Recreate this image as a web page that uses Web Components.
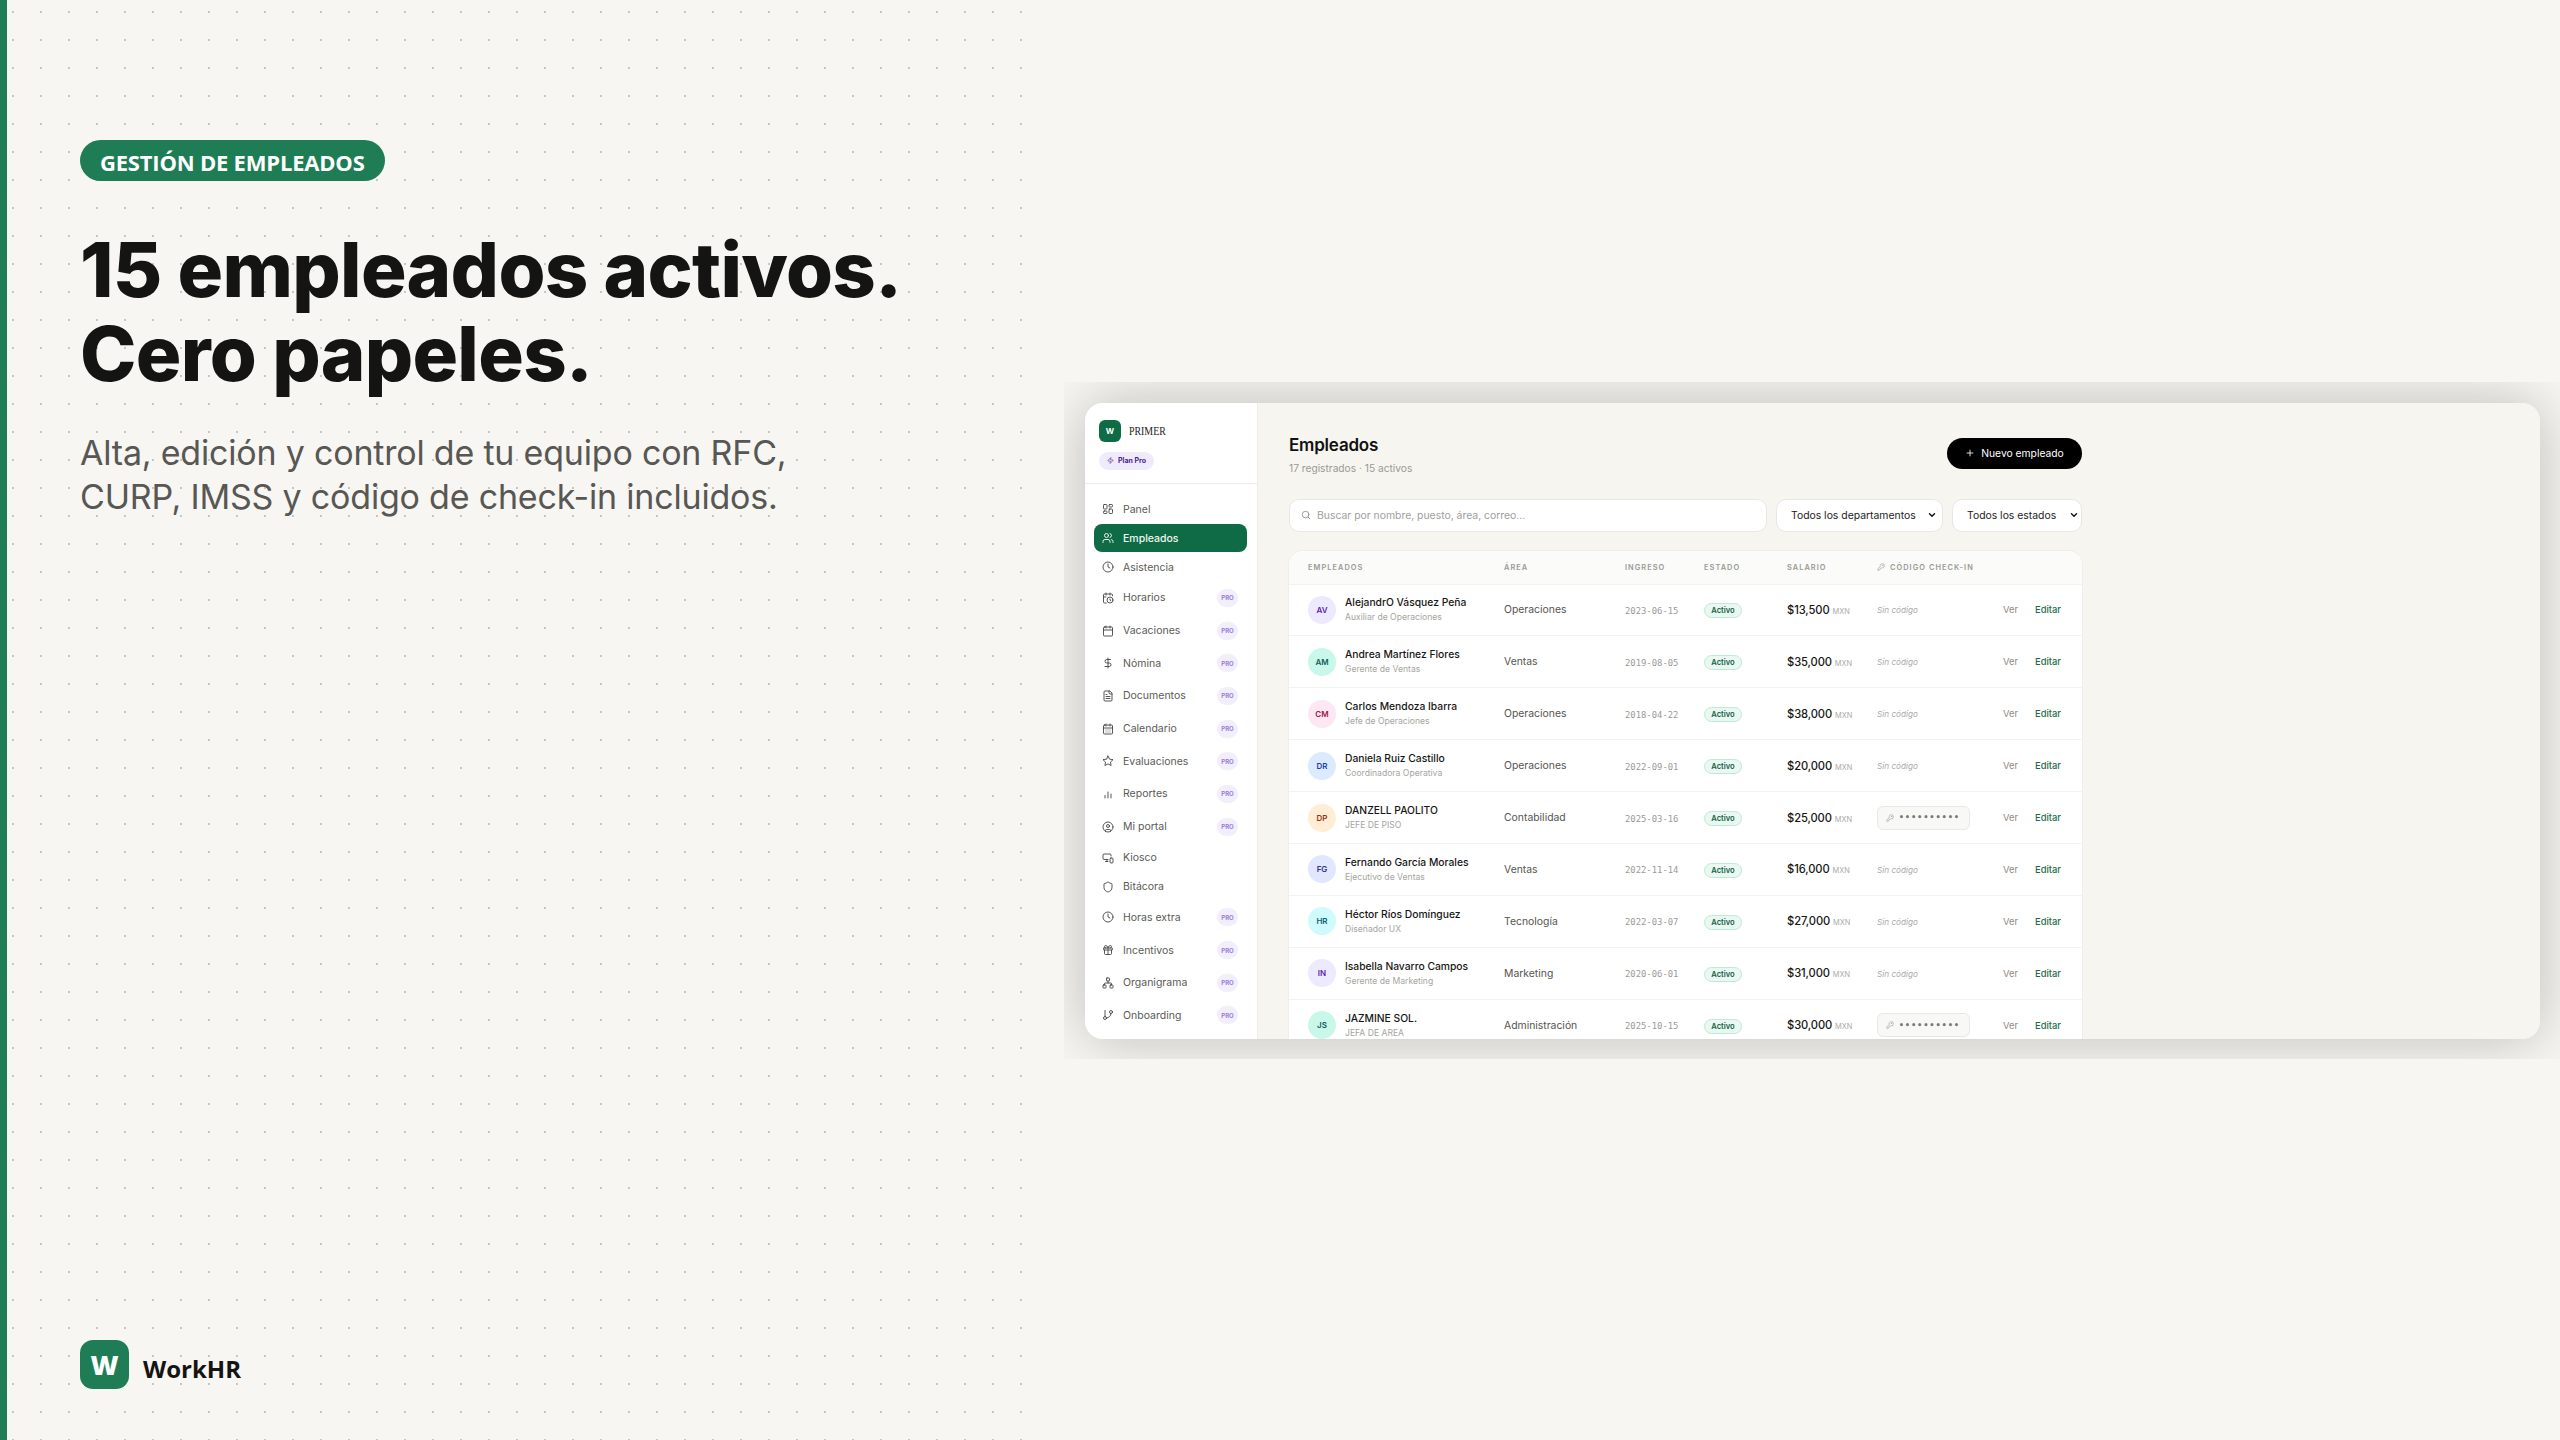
<!DOCTYPE html>
<html lang="es">
<head>
<meta charset="utf-8">
<title>WorkHR - Empleados</title>
<style>
  html, body { margin: 0; padding: 0; background: #f7f6f2; }
</style>
</head>
<body>
<promo-slide></promo-slide>
<script>
const UI_FONT = `"Inter", "Liberation Sans", sans-serif`;

const ICONS = {
  grid: `<rect x="3" y="3" width="7" height="9" rx="1.5"/><rect x="14" y="3" width="7" height="5" rx="1.5"/><rect x="14" y="12" width="7" height="9" rx="1.5"/><rect x="3" y="16" width="7" height="5" rx="1.5"/>`,
  users: `<path d="M16 21v-2a4 4 0 0 0-4-4H6a4 4 0 0 0-4 4v2"/><circle cx="9" cy="7" r="4"/><path d="M22 21v-2a4 4 0 0 0-3-3.87"/><path d="M16 3.13a4 4 0 0 1 0 7.75"/>`,
  clock: `<circle cx="12" cy="12" r="10"/><polyline points="12 6 12 12 16 14"/>`,
  calclock: `<path d="M21 7.5V6a2 2 0 0 0-2-2H5a2 2 0 0 0-2 2v14a2 2 0 0 0 2 2h3.5"/><path d="M16 2v4"/><path d="M8 2v4"/><path d="M3 10h5"/><path d="M17.5 17.5 16 16.3V14"/><circle cx="16" cy="16" r="6"/>`,
  calendar: `<rect x="3" y="4" width="18" height="18" rx="2"/><path d="M16 2v4"/><path d="M8 2v4"/><path d="M3 10h18"/>`,
  dollar: `<path d="M12 2v20"/><path d="M17 5H9.5a3.5 3.5 0 0 0 0 7h5a3.5 3.5 0 0 1 0 7H6"/>`,
  file: `<path d="M15 2H6a2 2 0 0 0-2 2v16a2 2 0 0 0 2 2h12a2 2 0 0 0 2-2V7Z"/><path d="M14 2v4a2 2 0 0 0 2 2h4"/><path d="M16 13H8"/><path d="M16 17H8"/><path d="M10 9H8"/>`,
  caldays: `<rect x="3" y="4" width="18" height="18" rx="2"/><path d="M16 2v4"/><path d="M8 2v4"/><path d="M3 10h18"/><path d="M8 14h.01M12 14h.01M16 14h.01M8 18h.01M12 18h.01M16 18h.01"/>`,
  star: `<polygon points="12 2 15.09 8.26 22 9.27 17 14.14 18.18 21.02 12 17.77 5.82 21.02 7 14.14 2 9.27 8.91 8.26"/>`,
  chart: `<path d="M12 20V8"/><path d="M18 20V12"/><path d="M6 20v-5"/>`,
  portal: `<circle cx="12" cy="12" r="10"/><circle cx="12" cy="10" r="3"/><path d="M7 20.662V19a2 2 0 0 1 2-2h6a2 2 0 0 1 2 2v1.662"/>`,
  kiosk: `<path d="M18 8V6a2 2 0 0 0-2-2H4a2 2 0 0 0-2 2v7a2 2 0 0 0 2 2h8"/><path d="M10 19v-4"/><path d="M7 19h5"/><rect x="16" y="12" width="6" height="10" rx="2"/>`,
  shield: `<path d="M20 13c0 5-3.5 7.5-7.66 8.95a1 1 0 0 1-.67-.01C7.5 20.5 4 18 4 13V6a1 1 0 0 1 1-1c2 0 4.5-1.2 6.24-2.72a1.17 1.17 0 0 1 1.52 0C14.51 3.81 17 5 19 5a1 1 0 0 1 1 1z"/>`,
  gift: `<rect x="3" y="8" width="18" height="4" rx="1"/><path d="M12 8v13"/><path d="M19 12v7a2 2 0 0 1-2 2H7a2 2 0 0 1-2-2v-7"/><path d="M7.5 8a2.5 2.5 0 0 1 0-5A4.8 8 0 0 1 12 8a4.8 8 0 0 1 4.5-5 2.5 2.5 0 0 1 0 5"/>`,
  org: `<rect x="16" y="16" width="6" height="6" rx="1"/><rect x="2" y="16" width="6" height="6" rx="1"/><rect x="9" y="2" width="6" height="6" rx="1"/><path d="M5 16v-3a1 1 0 0 1 1-1h12a1 1 0 0 1 1 1v3"/><path d="M12 12V8"/>`,
  branch: `<line x1="6" y1="3" x2="6" y2="15"/><circle cx="18" cy="6" r="3"/><circle cx="6" cy="18" r="3"/><path d="M18 9a9 9 0 0 1-9 9"/>`,
  search: `<circle cx="11" cy="11" r="8"/><path d="m21 21-4.3-4.3"/>`,
  key: `<path d="M2.586 17.414A2 2 0 0 0 2 18.828V21a1 1 0 0 0 1 1h3a1 1 0 0 0 1-1v-1a1 1 0 0 1 1-1h1a1 1 0 0 0 1-1v-1a1 1 0 0 1 1-1h.172a2 2 0 0 0 1.414-.586l.814-.814a6.5 6.5 0 1 0-4-4z"/><circle cx="16.5" cy="7.5" r=".5"/>`,
  plus: `<path d="M5 12h14"/><path d="M12 5v14"/>`,
  zap: `<path d="M4 14a1 1 0 0 1-.78-1.63l9.9-10.2a.5.5 0 0 1 .86.46l-1.92 6.02A1 1 0 0 0 13 10h7a1 1 0 0 1 .78 1.63l-9.9 10.2a.5.5 0 0 1-.86-.46l1.92-6.02A1 1 0 0 0 11 14z"/>`,
  chevron: `<path d="m6 9 6 6 6-6"/>`,
};

const icon = (name, size, width = 2) =>
  `<svg xmlns="http://www.w3.org/2000/svg" width="${size}" height="${size}" viewBox="0 0 24 24" fill="none" stroke="currentColor" stroke-width="${width}" stroke-linecap="round" stroke-linejoin="round">${ICONS[name]}</svg>`;

const NAV = [
  ["grid", "Panel"],
  ["users", "Empleados", false, true],
  ["clock", "Asistencia"],
  ["calclock", "Horarios", true],
  ["calendar", "Vacaciones", true],
  ["dollar", "Nómina", true],
  ["file", "Documentos", true],
  ["caldays", "Calendario", true],
  ["star", "Evaluaciones", true],
  ["chart", "Reportes", true],
  ["portal", "Mi portal", true],
  ["kiosk", "Kiosco"],
  ["shield", "Bitácora"],
  ["clock", "Horas extra", true],
  ["gift", "Incentivos", true],
  ["org", "Organigrama", true],
  ["branch", "Onboarding", true],
];

const EMPLOYEES = [
  ["AV", "#ede9fe", "#5b21b6", "AlejandrO Vásquez Peña", "Auxiliar de Operaciones", "Operaciones", "2023-06-15", "$13,500", false],
  ["AM", "#c9f7ea", "#115e59", "Andrea Martínez Flores", "Gerente de Ventas", "Ventas", "2019-08-05", "$35,000", false],
  ["CM", "#fce7f3", "#9d174d", "Carlos Mendoza Ibarra", "Jefe de Operaciones", "Operaciones", "2018-04-22", "$38,000", false],
  ["DR", "#dbeafe", "#1e40af", "Daniela Ruiz Castillo", "Coordinadora Operativa", "Operaciones", "2022-09-01", "$20,000", false],
  ["DP", "#ffedd5", "#9a3412", "DANZELL PAOLITO", "JEFE DE PISO", "Contabilidad", "2025-03-16", "$25,000", true],
  ["FG", "#e0e7ff", "#3730a3", "Fernando García Morales", "Ejecutivo de Ventas", "Ventas", "2022-11-14", "$16,000", false],
  ["HR", "#cffafe", "#155e75", "Héctor Ríos Domínguez", "Diseñador UX", "Tecnología", "2022-03-07", "$27,000", false],
  ["IN", "#ede9fe", "#5b21b6", "Isabella Navarro Campos", "Gerente de Marketing", "Marketing", "2020-06-01", "$31,000", false],
  ["JS", "#c9f7ea", "#115e59", "JAZMINE SOL.", "JEFA DE AREA", "Administración", "2025-10-15", "$30,000", true],
];

class BrandMark extends HTMLElement {
  constructor() {
    super();
    this.attachShadow({ mode: "open" });
  }

  connectedCallback() {
    this.shadowRoot.innerHTML = `
      <style>
        :host { display: flex; align-items: center; gap: 14px; }
        .logo {
          width: 49px; height: 49px;
          border-radius: 13px;
          background: #1e7d55;
          color: #fff;
          display: flex; align-items: center; justify-content: center;
          font: 800 27px "Open Sans", sans-serif;
        }
        .name { font: 700 24px "Open Sans", sans-serif; color: #141412; padding-top: 7px; }
      </style>
      <div class="logo">W</div>
      <div class="name"><slot></slot></div>
    `;
  }
}

class NavItem extends HTMLElement {
  constructor() {
    super();
    this.attachShadow({ mode: "open" });
  }

  connectedCallback() {
    const pro = this.hasAttribute("pro");
    const active = this.hasAttribute("active");
    this.shadowRoot.innerHTML = `
      <style>
        :host {
          display: flex; align-items: center;
          height: ${pro ? "32.7px" : "29px"};
          margin: 0 10px 0 9px;
        }
        .item {
          flex: 1;
          height: 28px;
          display: flex; align-items: center;
          gap: 9px;
          padding: 0 9px 0 8px;
          border-radius: 8px;
          font: 400 10.5px ${UI_FONT};
          color: ${active ? "#eef8f3" : "#5a5a56"};
          background: ${active ? "#0f6b45" : "transparent"};
          ${active ? "font-weight: 500;" : ""}
        }
        svg { flex: none; color: ${active ? "#fff" : "#444"}; }
        .label { flex: 1; }
        .pro {
          width: 21px; height: 18px;
          border-radius: 9px;
          background: #f2eefc;
          color: #9b80d8;
          font: 700 6px ${UI_FONT};
          display: flex; align-items: center; justify-content: center;
        }
      </style>
      <div class="item">
        ${icon(this.getAttribute("icon"), 12, 1.8)}
        <span class="label"><slot></slot></span>
        ${pro ? `<span class="pro">PRO</span>` : ""}
      </div>
    `;
  }
}

class SideNav extends HTMLElement {
  constructor() {
    super();
    this.attachShadow({ mode: "open" });
  }

  connectedCallback() {
    this.shadowRoot.innerHTML = `
      <style>
        :host {
          display: block;
          width: 172px;
          flex: none;
          background: #fff;
          border-right: 1px solid #eeede9;
        }
        .head {
          box-sizing: border-box;
          padding: 17px 14px 0;
          border-bottom: 1px solid #eeede9;
          height: 81px;
        }
        .brand { display: flex; align-items: center; gap: 8px; }
        .logo {
          width: 22px; height: 22px;
          border-radius: 6px;
          background: #0f6b45;
          color: #fff;
          font: 700 8px ${UI_FONT};
          display: flex; align-items: center; justify-content: center;
        }
        .company { font: 400 13px "Liberation Serif", serif; color: #222; transform: scaleX(.76); transform-origin: left; }
        .plan {
          display: inline-flex; align-items: center; gap: 4px;
          height: 18px;
          margin-top: 10px;
          padding: 0 8px;
          border-radius: 9px;
          background: #f0ebfc;
          color: #4c1d95;
          font: 700 7px ${UI_FONT};
        }
        nav { padding-top: 11px; }
      </style>
      <div class="head">
        <div class="brand"><div class="logo">W</div><div class="company">PRIMER</div></div>
        <div class="plan">${icon("zap", 7, 2)}Plan Pro</div>
      </div>
      <nav>
        ${NAV.map(([ic, label, pro, active]) => `<nav-item icon="${ic}"${pro ? " pro" : ""}${active ? " active" : ""}>${label}</nav-item>`).join("")}
      </nav>
    `;
  }
}

class EmployeeRow extends HTMLElement {
  constructor() {
    super();
    this.attachShadow({ mode: "open" });
  }

  set employee(data) {
    this.data = data;
  }

  connectedCallback() {
    const [initials, bg, fg, name, role, area, date, salary, hasCode] = this.data;
    this.shadowRoot.innerHTML = `
      <style>
        :host {
          display: grid;
          grid-template-columns: 196px 121px 79px 83px 90px 126px 32px 1fr;
          align-items: center;
          height: 51.9px;
          box-sizing: border-box;
          padding-left: 19px;
          border-top: 1px solid #f3f3f0;
          font-family: ${UI_FONT};
        }
        .who { display: flex; align-items: center; gap: 9px; }
        .avatar {
          width: 28px; height: 28px;
          border-radius: 50%;
          background: ${bg};
          color: ${fg};
          font: 600 8px ${UI_FONT};
          display: flex; align-items: center; justify-content: center;
          flex: none;
        }
        .name { font-size: 10.3px; font-weight: 500; color: #161614; line-height: 14px; white-space: nowrap; }
        .role { font-size: 8.6px; color: #a5a5a0; line-height: 13px; margin-top: 2px; white-space: nowrap; }
        .area { font-size: 10.4px; color: #55554f; }
        .date { font: 400 8.9px "DejaVu Sans Mono", monospace; color: #9a9a95; margin-top: 2px; }
        .status {
          justify-self: start;
          width: 38px; height: 15px;
          margin-top: 2px;
          box-sizing: border-box;
          border: 1px solid #bfe9d7;
          border-radius: 8px;
          background: #e9f8f2;
          color: #14603f;
          font-size: 7.6px; font-weight: 600;
          display: flex; align-items: center; justify-content: center;
        }
        .salary { font-size: 11.2px; font-weight: 500; color: #161614; white-space: nowrap; letter-spacing: -.1px; }
        .salary small { font-size: 7.4px; font-weight: 400; color: #aaa; letter-spacing: 0; }
        .none { display: block; font-size: 8.2px; line-height: 10px; font-style: italic; color: #aaa; margin-top: 1px; }
        .code {
          width: 93px; height: 24px;
          box-sizing: border-box;
          padding-left: 8px;
          border: 1px solid #e8e8e4;
          border-radius: 6px;
          background: #f8f8f6;
          display: flex; align-items: center; gap: 5px;
          color: #999;
        }
        .dots { font: 700 8px "DejaVu Sans Mono", monospace; color: #777; letter-spacing: 1.3px; }
        .ver { font-size: 9.4px; color: #8a8a85; }
        .edit { font-size: 9.4px; font-weight: 500; color: #1f6b4c; }
      </style>
      <div class="who">
        <div class="avatar">${initials}</div>
        <div><div class="name">${name}</div><div class="role">${role}</div></div>
      </div>
      <div class="area">${area}</div>
      <div class="date">${date}</div>
      <div class="status">Activo</div>
      <div class="salary">${salary} <small>MXN</small></div>
      <div>${hasCode ? `<div class="code">${icon("key", 8, 1.8)}<span class="dots">••••••••••</span></div>` : `<span class="none">Sin código</span>`}</div>
      <div class="ver">Ver</div>
      <div class="edit">Editar</div>
    `;
  }
}

class EmployeeTable extends HTMLElement {
  constructor() {
    super();
    this.attachShadow({ mode: "open" });
  }

  connectedCallback() {
    this.shadowRoot.innerHTML = `
      <style>
        :host {
          display: block;
          background: #fff;
          border-radius: 14px 14px 0 0;
          box-shadow: 0 0 0 1px #efeeea;
          overflow: hidden;
        }
        .head {
          display: grid;
          grid-template-columns: 196px 121px 79px 83px 90px 1fr;
          align-items: center;
          height: 33px;
          padding-left: 19px;
          background: #fbfbfa;
          font: 600 7.4px ${UI_FONT};
          letter-spacing: 1.05px;
          color: #9a9a95;
          white-space: nowrap;
        }
        .check { display: flex; align-items: center; gap: 5px; }
      </style>
      <div class="head">
        <div>EMPLEADOS</div><div>ÁREA</div><div>INGRESO</div><div>ESTADO</div><div>SALARIO</div>
        <div class="check">${icon("key", 8, 1.8)}CÓDIGO CHECK-IN</div>
      </div>
      <div id="rows"></div>
    `;
    const rows = this.shadowRoot.querySelector("#rows");
    EMPLOYEES.forEach((emp) => {
      const row = document.createElement("employee-row");
      row.employee = emp;
      rows.appendChild(row);
    });
  }
}

class EmployeesPage extends HTMLElement {
  constructor() {
    super();
    this.attachShadow({ mode: "open" });
  }

  connectedCallback() {
    this.shadowRoot.innerHTML = `
      <style>
        :host {
          display: block;
          flex: 1;
          background: #f6f5f0;
          padding: 31px 0 0 31px;
          font-family: ${UI_FONT};
        }
        .wrap { width: 793px; }
        header { display: flex; justify-content: space-between; align-items: flex-start; }
        h1 { margin: 0; font-size: 17px; font-weight: 600; line-height: 22px; color: #111; letter-spacing: -.2px; }
        .sub { font-size: 10.2px; color: #9a9a95; line-height: 14px; margin-top: 5px; }
        .new {
          width: 135px; height: 31px;
          margin-top: 4px;
          border-radius: 16px;
          background: #000;
          color: #fff;
          font-size: 10.3px;
          display: flex; align-items: center; justify-content: center; gap: 6px;
        }
        .filters { display: flex; gap: 9px; margin: 24px 0 19px; }
        .box {
          height: 33px;
          box-sizing: border-box;
          background: #fff;
          border: 1px solid #e8e7e2;
          border-radius: 10px;
          display: flex; align-items: center;
          font-size: 10.4px;
          color: #222;
        }
        .search { flex: 1; padding-left: 11px; gap: 6px; color: #a0a09b; }
        .search svg { color: #888; }
        .dep { width: 167px; padding: 0 5px 0 14px; justify-content: space-between; }
        .est { width: 130px; padding: 0 2px 0 14px; justify-content: space-between; }
        .box svg.chev { color: #111; }
      </style>
      <div class="wrap">
        <header>
          <div>
            <h1>Empleados</h1>
            <div class="sub">17 registrados · 15 activos</div>
          </div>
          <div class="new">${icon("plus", 10, 2)}Nuevo empleado</div>
        </header>
        <div class="filters">
          <div class="box search">${icon("search", 10, 2)}<span>Buscar por nombre, puesto, área, correo...</span></div>
          <div class="box dep"><span>Todos los departamentos</span>${icon("chevron", 10, 3.4).replace("<svg", '<svg class="chev"')}</div>
          <div class="box est"><span>Todos los estados</span>${icon("chevron", 10, 3.4).replace("<svg", '<svg class="chev"')}</div>
        </div>
        <employee-table></employee-table>
      </div>
    `;
  }
}

class AppWindow extends HTMLElement {
  constructor() {
    super();
    this.attachShadow({ mode: "open" });
  }

  connectedCallback() {
    this.shadowRoot.innerHTML = `
      <style>
        :host {
          display: block;
          overflow: hidden;
          padding: 21px 20px 20px 21px;
        }
        .card {
          display: flex;
          height: 636px;
          border-radius: 18px;
          overflow: hidden;
          box-shadow: 0 0 60px rgba(0, 0, 0, .24);
        }
      </style>
      <div class="card">
        <side-nav></side-nav>
        <employees-page></employees-page>
      </div>
    `;
  }
}

class PromoSlide extends HTMLElement {
  constructor() {
    super();
    this.attachShadow({ mode: "open" });
  }

  connectedCallback() {
    this.shadowRoot.innerHTML = `
      <style>
        :host {
          display: flex;
          width: 2560px; height: 1440px;
          overflow: hidden;
          background: #f7f6f2;
        }
        .left {
          width: 1030px;
          flex: none;
          box-sizing: border-box;
          display: flex; flex-direction: column;
          align-items: flex-start;
          padding: 140px 0 51px 73px;
          border-left: 7px solid #1e7d55;
          background-image: radial-gradient(circle, #c6c6c2 1.3px, transparent 1.5px);
          background-size: 28px 28px;
          background-position: -8px -2px;
          background-origin: padding-box;
        }
        .tag {
          height: 41px;
          box-sizing: border-box;
          padding: 2px 20px 0;
          display: flex; align-items: center;
          border-radius: 21px;
          background: #1e7d55;
          color: #fff;
          font: 700 22px "Open Sans", sans-serif;
          letter-spacing: -.2px;
        }
        h1 {
          margin: 46px 0 0;
          font: 800 76px/84px "Inter", sans-serif;
          letter-spacing: -.7px;
          color: #141412;
        }
        p {
          margin: 36px 0 0;
          font: 400 34px/44px "Inter", sans-serif;
          letter-spacing: -.2px;
          color: #575753;
        }
        brand-mark { margin-top: auto; }
        .right {
          flex: 1;
          min-width: 0;
          display: flex; flex-direction: column; justify-content: center;
          padding-left: 34px;
        }
      </style>
      <section class="left">
        <div class="tag">GESTIÓN DE EMPLEADOS</div>
        <h1>15 empleados activos.<br>Cero papeles.</h1>
        <p>Alta, edición y control de tu equipo con RFC,<br>CURP, IMSS y código de check-in incluidos.</p>
        <brand-mark>WorkHR</brand-mark>
      </section>
      <section class="right"><app-window></app-window></section>
    `;
  }
}

customElements.define("brand-mark", BrandMark);
customElements.define("nav-item", NavItem);
customElements.define("side-nav", SideNav);
customElements.define("employee-row", EmployeeRow);
customElements.define("employee-table", EmployeeTable);
customElements.define("employees-page", EmployeesPage);
customElements.define("app-window", AppWindow);
customElements.define("promo-slide", PromoSlide);
</script>
</body>
</html>
